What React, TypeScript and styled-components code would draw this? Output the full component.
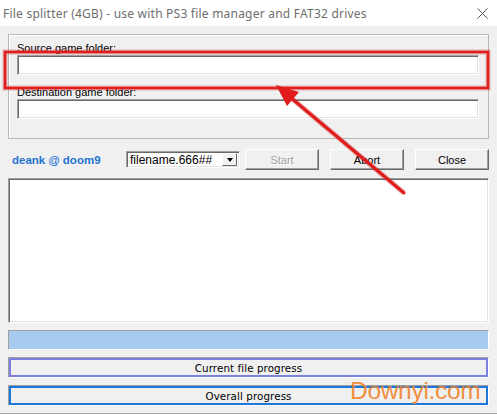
import React from "react";
import styled, { createGlobalStyle } from "styled-components";

const Global = createGlobalStyle`
  html, body { margin: 0; padding: 0; background: #f0f0f0; }
  * { box-sizing: border-box; }
`;

const Win = styled.div`
  position: relative;
  width: 497px;
  height: 414px;
  background: #f0f0f0;
  overflow: hidden;
  font-family: "Liberation Sans", Arial, sans-serif;
  font-size: 11px;
  color: #000;
  border-bottom: 1px solid #a8a8a8;
`;

const TitleBar = styled.div`
  height: 26px;
  background: #fff;
  display: flex;
  align-items: center;
  justify-content: space-between;
  padding: 0 9px 0 3px;
`;

const TitleText = styled.div`
  font-family: "Noto Sans", "DejaVu Sans", sans-serif;
  font-size: 12px;
  color: #6e6e6e;
  letter-spacing: 0.22px;
  white-space: nowrap;
`;

const Body = styled.div`
  padding: 8px 8px 0 8px;
  display: flex;
  flex-direction: column;
`;

const Group = styled.div`
  height: 105px;
  border: 1px solid #b8b8b8;
  box-shadow: inset 1px 1px 0 #fff;
  padding: 7px 9px 0 8px;
  display: flex;
  flex-direction: column;
`;

const Label = styled.div`
  height: 13px;
  line-height: 13px;
  white-space: nowrap;
`;

const Sunken = styled.div`
  background: #fff;
  border-top: 1px solid #a0a0a0;
  border-left: 1px solid #a0a0a0;
  border-right: 1px solid #fff;
  border-bottom: 1px solid #fff;
  box-shadow: inset 1px 1px 0 #696969, inset -1px -1px 0 #e3e3e3;
`;

const Input = styled(Sunken)`
  height: 20px;
  width: 100%;
`;

const Spacer = styled.div<{ $h: number }>`
  height: ${(p) => p.$h}px;
`;

const Toolbar = styled.div`
  margin-top: 10px;
  height: 21px;
  display: flex;
  align-items: center;
`;

const Credit = styled.div`
  width: 118px;
  padding-left: 4px;
  font-weight: bold;
  font-size: 11.5px;
  color: #1e74d0;
  white-space: nowrap;
`;

const Combo = styled(Sunken)`
  width: 114px;
  height: 17px;
  display: flex;
  align-items: center;
  padding: 0 2px 0 3px;
  font-size: 12px;
`;

const ComboText = styled.div`
  flex: 1;
  white-space: nowrap;
`;

const ComboBtn = styled.div`
  width: 15px;
  height: 13px;
  background: #f0f0f0;
  border-top: 1px solid #fff;
  border-left: 1px solid #fff;
  border-right: 1px solid #696969;
  border-bottom: 1px solid #696969;
  display: flex;
  align-items: center;
  justify-content: center;
  &::after {
    content: "";
    border-left: 3.5px solid transparent;
    border-right: 3.5px solid transparent;
    border-top: 4px solid #000;
  }
`;

const Button = styled.div<{ $disabled?: boolean; $ml: number }>`
  margin-left: ${(p) => p.$ml}px;
  width: 74px;
  height: 21px;
  background: #f0f0f0;
  border-top: 1px solid #fff;
  border-left: 1px solid #fff;
  border-right: 1px solid #696969;
  border-bottom: 1px solid #696969;
  box-shadow: inset -1px -1px 0 #a0a0a0;
  display: flex;
  align-items: center;
  justify-content: center;
  font-size: 11px;
  color: ${(p) => (p.$disabled ? "#a0a0a0" : "#000")};
  text-shadow: ${(p) => (p.$disabled ? "1px 1px 0 #fff" : "none")};
`;

const Log = styled(Sunken)`
  margin-top: 8px;
  height: 145px;
`;

const Bar = styled.div<{ $color: string; $mt: number; $fill?: boolean; $bw: number }>`
  margin-top: ${(p) => p.$mt}px;
  height: ${(p) => (p.$fill ? 20 : 21)}px;
  border-top: 1px solid #a0a0a0;
  border-left: 1px solid #a0a0a0;
  border-right: 1px solid #fff;
  border-bottom: 1px solid #fff;
  display: flex;
  & > div {
    flex: 1;
    border: ${(p) => p.$bw}px solid ${(p) => p.$color};
    background: ${(p) => (p.$fill ? "#a8caef" : "#f0f0f0")};
    display: flex;
    align-items: center;
    justify-content: center;
    font-family: "DejaVu Sans", Verdana, sans-serif;
    font-size: 10.3px;
    color: #000;
    letter-spacing: 0.1px;
  }
`;

const Overlay = styled.svg`
  position: absolute;
  left: 0;
  top: 0;
  pointer-events: none;
`;

const Watermark = styled.div`
  position: absolute;
  left: 350px;
  top: 377px;
  font-family: "Liberation Sans", Arial, sans-serif;
  font-size: 24.5px;
  color: rgba(240, 130, 40, 0.9);
  letter-spacing: -0.3px;
  pointer-events: none;
`;

export default function App() {
  return (
    <>
      <Global />
      <Win>
        <TitleBar>
          <TitleText>File splitter (4GB) - use with PS3 file manager and FAT32 drives</TitleText>
          <svg width="11" height="11" viewBox="0 0 11 11">
            <path d="M0.5 0.5 L10.5 10.5 M10.5 0.5 L0.5 10.5" stroke="#555" strokeWidth="1" />
          </svg>
        </TitleBar>
        <Body>
          <Group>
            <Label>Source game folder:</Label>
            <Input />
            <Spacer $h={11} />
            <Label>Destination game folder:</Label>
            <Input />
          </Group>
          <Toolbar>
            <Credit>deank @ doom9</Credit>
            <Combo>
              <ComboText>filename.666##</ComboText>
              <ComboBtn />
            </Combo>
            <Button $ml={5} $disabled>Start</Button>
            <Button $ml={11}>Abort</Button>
            <Button $ml={11}>Close</Button>
          </Toolbar>
          <Log />
          <Bar $color="#a8caef" $mt={7} $fill $bw={1}>
            <div />
          </Bar>
          <Bar $color="#7b7fe0" $mt={7} $bw={2}>
            <div>Current file progress</div>
          </Bar>
          <Bar $color="#1b78d8" $mt={7} $bw={2}>
            <div>Overall progress</div>
          </Bar>
        </Body>
        <Overlay width="497" height="414" viewBox="0 0 497 414">
          <defs>
            <filter id="soft" x="-10%" y="-10%" width="120%" height="120%">
              <feGaussianBlur stdDeviation="0.6" />
            </filter>
          </defs>
          <rect x="5" y="52" width="483" height="36" fill="none" stroke="rgba(200,40,40,0.35)" strokeWidth="5" filter="url(#soft)" />
          <rect x="5" y="52" width="483" height="36" fill="none" stroke="#e21d1d" strokeWidth="2.5" />
          <line x1="290" y1="97" x2="404" y2="193" stroke="rgba(200,40,40,0.35)" strokeWidth="5" filter="url(#soft)" />
          <line x1="290" y1="97" x2="404" y2="193" stroke="#e01c1c" strokeWidth="3" strokeLinecap="round" />
          <polygon points="276,85 287,106 299,92" fill="#e01c1c" />
        </Overlay>
        <Watermark>Downyi.com</Watermark>
      </Win>
    </>
  );
}
